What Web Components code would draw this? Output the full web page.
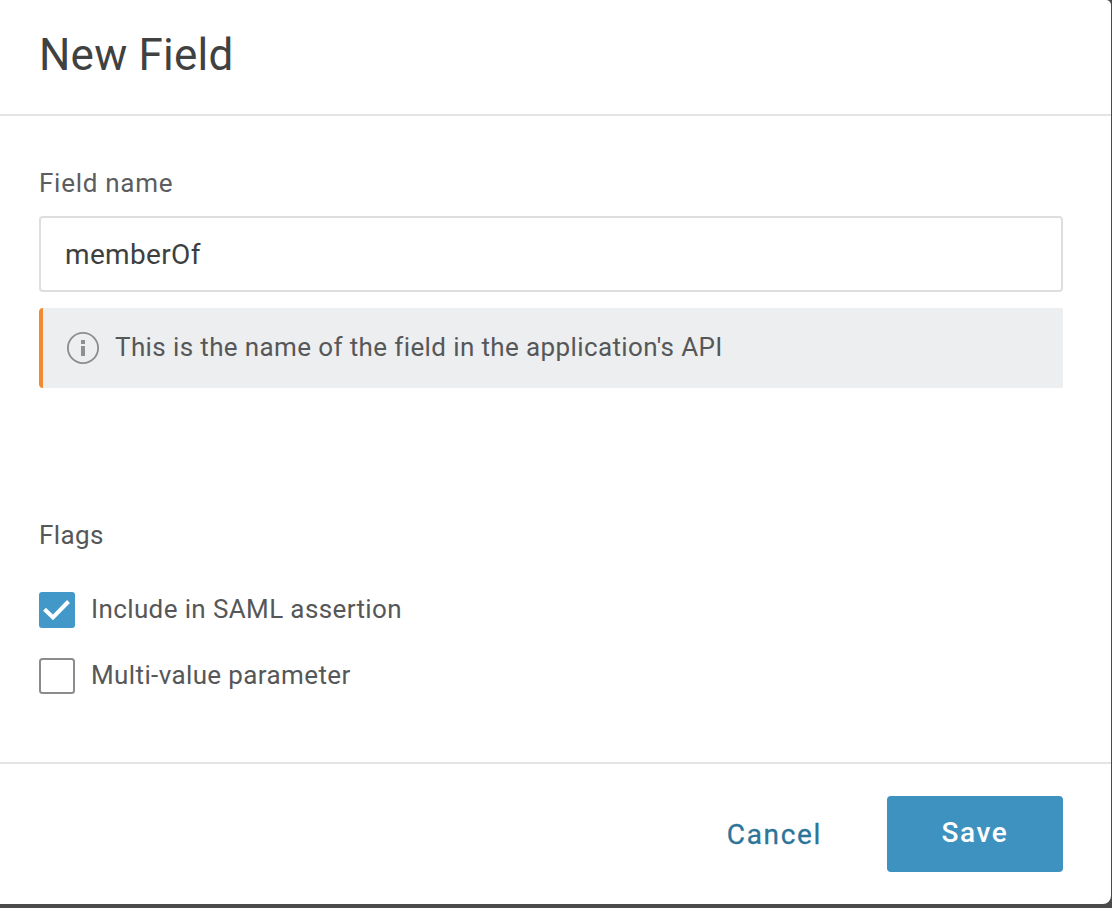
<!DOCTYPE html>
<html lang="en">
<head>
<meta charset="utf-8">
<title>New Field</title>
<style>
html,body{margin:0;height:100%}
body{background:#4b4a4a;overflow:hidden;font-family:Roboto,sans-serif;color:#565758}
</style>
</head>
<body>
<modal-dialog>
  <span slot="title">New Field</span>
  <text-field label="Field name" value="memberOf"></text-field>
  <info-hint>This is the name of the field in the application's API</info-hint>
  <flag-group label="Flags">
    <check-box checked>Include in SAML assertion</check-box>
    <check-box>Multi-value parameter</check-box>
  </flag-group>
  <action-button slot="actions" kind="link">Cancel</action-button>
  <action-button slot="actions" kind="primary">Save</action-button>
</modal-dialog>
<script>
class Base extends HTMLElement {
  connectedCallback() {
    if (this.shadowRoot) return;
    this.attachShadow({ mode: 'open' }).innerHTML = this.render();
  }
}

customElements.define('modal-dialog', class extends Base {
  render() {
    return `<style>
      :host{display:flex;flex-direction:column;box-sizing:border-box;width:1111px;height:904px;background:#fff;border-radius:0 5px 8px 0}
      header{box-sizing:border-box;height:116px;padding:29px 39px 0;border-bottom:2px solid #e4e4e4}
      h1{margin:0;font-size:44px;font-weight:400;line-height:52px;letter-spacing:.22px;color:#404141}
      main{flex:1;padding:52px 48px 0 39px}
      footer{box-sizing:border-box;height:142px;border-top:2px solid #e4e4e4;padding:32px 48px 0;display:flex;justify-content:flex-end;align-items:flex-start;gap:65px}
    </style>
    <header><h1><slot name="title"></slot></h1></header>
    <main><slot></slot></main>
    <footer><slot name="actions"></slot></footer>`;
  }
});

customElements.define('text-field', class extends Base {
  render() {
    return `<style>
      :host{display:block}
      .label{font-size:26px;line-height:30px;letter-spacing:.72px;color:#5c5d5e}
      .box{box-sizing:border-box;height:76px;margin-top:18px;padding:0 24px;border:2px solid #dedede;border-radius:4px;font-size:28px;line-height:74px;letter-spacing:.35px;color:#3e3f3f}
    </style>
    <div class="label">${this.getAttribute('label')}</div>
    <div class="box">${this.getAttribute('value')}</div>`;
  }
});

customElements.define('info-hint', class extends Base {
  render() {
    return `<style>
      :host{display:flex;align-items:center;box-sizing:border-box;height:80px;margin-top:16px;padding-left:24px;border-left:4px solid #f28b30;border-radius:4px 2px 2px 4px;background:#edeef0;font-size:26px;line-height:30px;letter-spacing:.38px}
      svg{display:block;margin-right:16px}
      span{padding-bottom:2px}
    </style>
    <svg width="32" height="32" viewBox="0 0 32 32"><circle cx="16" cy="16" r="15.1" fill="none" stroke="#8b8c8c" stroke-width="1.8"/><path d="M14 8h4v4h-4zM14 14h4v10h-4z" fill="#8f9090"/></svg>
    <span><slot></slot></span>`;
  }
});

customElements.define('flag-group', class extends Base {
  render() {
    return `<style>
      :host{display:block;margin-top:132px}
      .label{font-size:26px;line-height:30px;letter-spacing:.4px}
      .list{display:grid;gap:30px;margin-top:42px}
    </style>
    <div class="label">${this.getAttribute('label')}</div>
    <div class="list"><slot></slot></div>`;
  }
});

customElements.define('check-box', class extends Base {
  render() {
    const on = this.hasAttribute('checked');
    return `<style>
      :host{display:flex;align-items:center;gap:16px;height:36px;font-size:26px;line-height:30px;letter-spacing:.38px}
      svg{display:block}
      span{padding-bottom:2px}
    </style>
    <svg width="36" height="36" viewBox="0 0 36 36">${on
      ? '<rect width="36" height="36" rx="3" fill="#4298c9"/><path d="M5.5 17.2l8.5 8.3L29.5 9.5" fill="none" stroke="#fff" stroke-width="4"/>'
      : '<rect x="1" y="1" width="34" height="34" rx="2.5" fill="#fff" stroke="#8c8c8c" stroke-width="2"/>'}</svg>
    <span><slot></slot></span>`;
  }
});

customElements.define('action-button', class extends Base {
  render() {
    const primary = this.getAttribute('kind') === 'primary';
    return `<style>
      :host{display:block;box-sizing:border-box;height:76px;font-size:28px;line-height:78px;letter-spacing:1.65px;text-align:center}
      ${primary
        ? ':host{width:176px;border-radius:4px;background:#3e92c0;color:#fff;font-weight:500;line-height:74px;letter-spacing:1.55px}'
        : ':host{color:#2d7499;-webkit-text-stroke:.3px #2d7499}'}
    </style><slot></slot>`;
  }
});
</script>
</body>
</html>
